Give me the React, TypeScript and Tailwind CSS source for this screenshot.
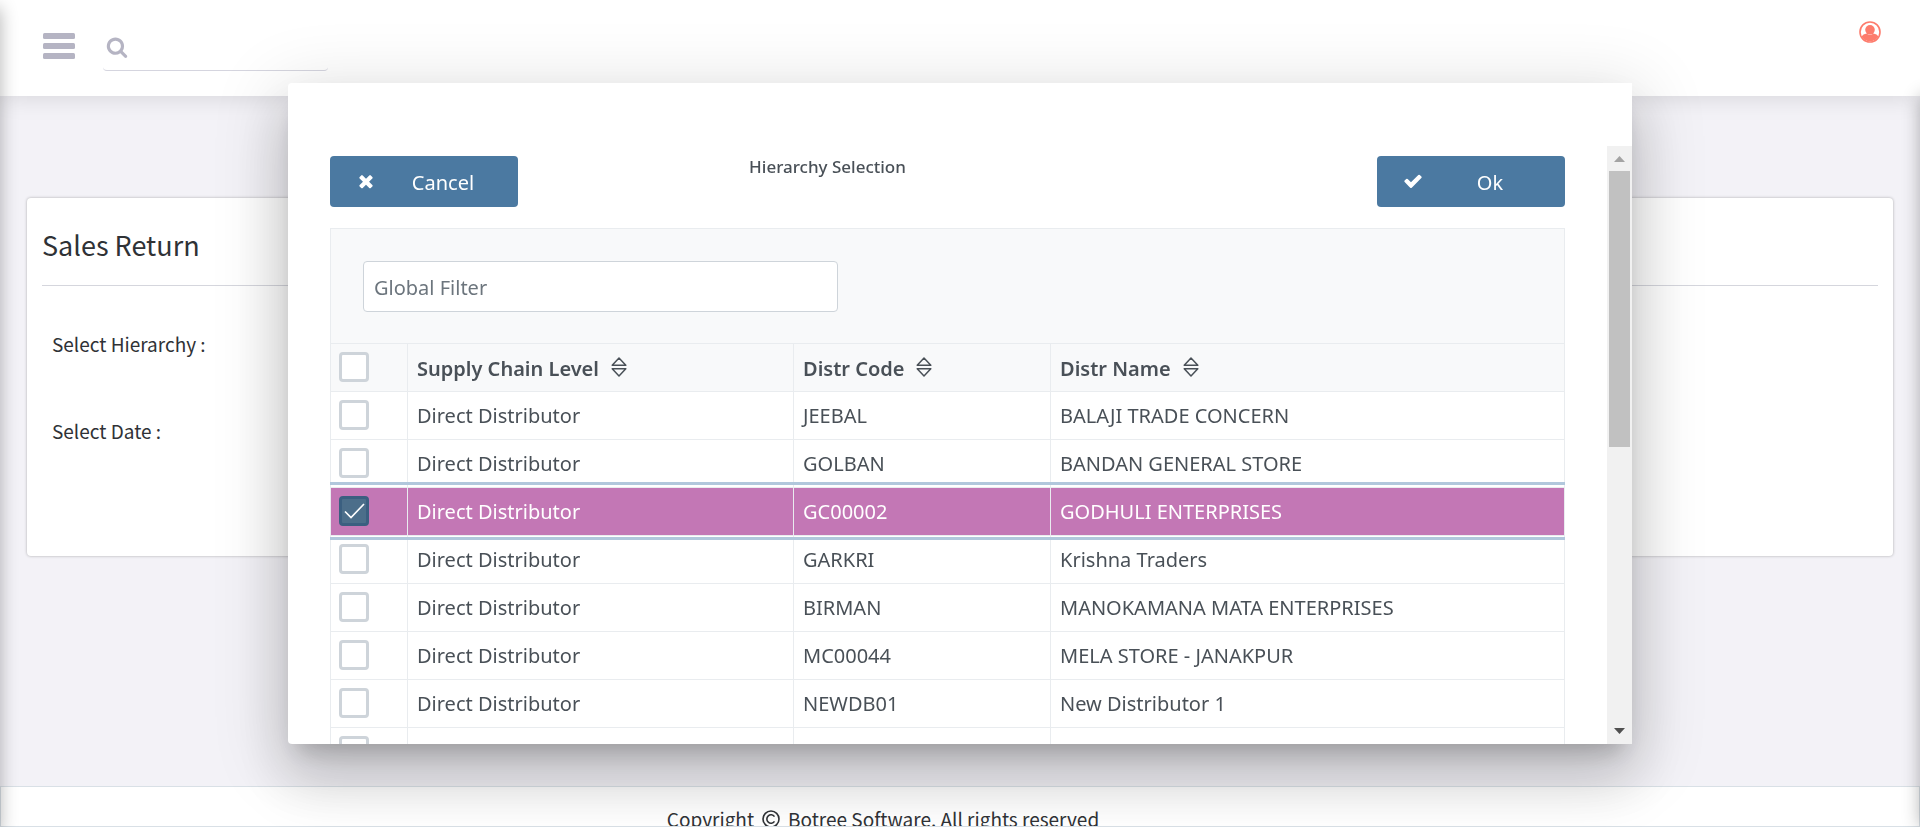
import React, { useState } from "react";

const rows = [
  ["JEEBAL", "BALAJI TRADE CONCERN"],
  ["GOLBAN", "BANDAN GENERAL STORE"],
  ["GC00002", "GODHULI ENTERPRISES"],
  ["GARKRI", "Krishna Traders"],
  ["BIRMAN", "MANOKAMANA MATA ENTERPRISES"],
  ["MC00044", "MELA STORE - JANAKPUR"],
  ["NEWDB01", "New Distributor 1"],
  ["NEWDB02", "Gunavi Sellers"],
];

function SortIcon() {
  return (
    <svg className="h-5 w-4" viewBox="0 0 16 20" fill="none" stroke="currentColor" strokeWidth="1.5" strokeLinejoin="round" aria-hidden="true">
      <path d="M8 1 L14.8 8.2 H1.2 Z" />
      <path d="M8 19 L14.8 11.8 H1.2 Z" />
    </svg>
  );
}

function Check({ checked, onChange, label }: { checked: boolean; onChange: () => void; label: string }) {
  return (
    <span className="grid h-[30px] w-[30px]">
      <input
        type="checkbox"
        aria-label={label}
        checked={checked}
        onChange={onChange}
        className="col-start-1 row-start-1 h-[30px] w-[30px] appearance-none rounded border-3 border-[#ced4da] bg-white checked:border-[#3b5f80] checked:bg-[#4c6e8a]"
      />
      {checked && (
        <svg className="pointer-events-none col-start-1 row-start-1 h-[30px] w-[30px]" viewBox="0 0 30 30" fill="none" stroke="#fff" strokeWidth="1.7" aria-hidden="true">
          <path d="M6 15.5 L12 21.5 L25 8" />
        </svg>
      )}
    </span>
  );
}

function HeadCell({ label, width }: { label: string; width: string }) {
  return (
    <th scope="col" className={`${width} border border-[#e9ecef] bg-[#f8f9fa] px-[9px] text-left font-semibold`}>
      <button type="button" className="flex items-center gap-3">
        <span className="pt-[3px]">{label}</span>
        <SortIcon />
      </button>
    </th>
  );
}

function HierarchyDialog() {
  const [selected, setSelected] = useState<string[]>(["GC00002"]);
  const toggle = (code: string) =>
    setSelected((s) => (s.includes(code) ? s.filter((c) => c !== code) : [...s, code]));

  return (
    <div
      role="dialog"
      aria-labelledby="dialog-title"
      className="fixed inset-x-[15vw] inset-y-[10vh] flex flex-col overflow-hidden rounded-l bg-white pt-[63px] font-['Noto_Sans',sans-serif] text-[#495057] shadow-[0_16px_22px_-10px_rgba(0,0,0,0.2),0_36px_57px_4px_rgba(0,0,0,0.14),0_14px_69px_12px_rgba(0,0,0,0.12)]"
    >
      <div className="flex min-h-0 flex-1">
        <div className="min-w-0 flex-1 overflow-hidden pr-[42px] pl-[42px] pt-[10px]">
          <div className="flex justify-between">
            <button type="button" className="flex h-[51px] w-[188px] items-center rounded bg-[#4b79a1] pl-[26px] text-xl text-white">
              <svg className="h-5 w-5" viewBox="0 0 1792 1792" fill="currentColor" aria-hidden="true">
                <path d="M1490 1322q0 40-28 68l-136 136q-28 28-68 28t-68-28l-294-294-294 294q-28 28-68 28t-68-28l-136-136q-28-28-28-68t28-68l294-294-294-294q-28-28-28-68t28-68l136-136q28-28 68-28t68 28l294 294 294-294q28-28 68-28t68 28l136 136q28 28 28 68t-28 68l-294 294 294 294q28 28 28 68z" />
              </svg>
              <span className="flex-1 pt-1 pr-2 text-center">Cancel</span>
            </button>
            <h2 id="dialog-title" className="pr-[240px] text-[17px]/[22px] font-medium">Hierarchy Selection</h2>
            <button type="button" className="flex h-[51px] w-[188px] items-center rounded bg-[#4b79a1] pl-[26px] text-xl text-white">
              <svg className="h-5 w-5" viewBox="0 0 1792 1792" fill="currentColor" aria-hidden="true">
                <path d="M1671 566q0 40-28 68l-724 724-136 136q-28 28-68 28t-68-28l-136-136-362-362q-28-28-28-68t28-68l136-136q28-28 68-28t68 28l294 295 656-657q28-28 68-28t68 28l136 136q28 28 28 68z" />
              </svg>
              <span className="flex-1 pt-1 pr-2 text-center">Ok</span>
            </button>
          </div>

          <div className="mt-[21px] overflow-hidden">
            <div className="border border-b-0 border-[#e9ecef] bg-[#f8f9fa] px-8 pt-8 pb-[31px]">
              <input
                type="text"
                aria-label="Global Filter"
                placeholder="Global Filter"
                className="h-[51px] w-[475px] rounded border border-[#ced4da] bg-white px-[10px] pt-0.5 text-xl placeholder:text-[#6c757d]"
              />
            </div>
            <table className="w-full table-fixed border-collapse text-xl leading-6">
              <thead>
                <tr className="h-12">
                  <th scope="col" className="w-[77px] border border-[#e9ecef] bg-[#f8f9fa] px-2">
                    <Check
                      label="Select all"
                      checked={selected.length === rows.length}
                      onChange={() => setSelected(selected.length === rows.length ? [] : rows.map((r) => r[0]))}
                    />
                  </th>
                  <HeadCell label="Supply Chain Level" width="w-[386px]" />
                  <HeadCell label="Distr Code" width="w-[257px]" />
                  <HeadCell label="Distr Name" width="w-auto" />
                </tr>
              </thead>
              <tbody>
                {rows.map(([code, name]) => {
                  const on = selected.includes(code);
                  return (
                    <tr
                      key={code}
                      className={on ? "h-12 bg-[#c377b5] text-white outline-3 outline-offset-2 outline-[#b1c7dc]" : "h-12"}
                    >
                      <td className="border border-[#e9ecef] px-2">
                        <Check label={`Select ${name}`} checked={on} onChange={() => toggle(code)} />
                      </td>
                      <td className="border border-[#e9ecef] px-[9px] pt-0.5">Direct Distributor</td>
                      <td className="border border-[#e9ecef] px-[9px] pt-0.5">{code}</td>
                      <td className="border border-[#e9ecef] px-[9px] pt-0.5">{name}</td>
                    </tr>
                  );
                })}
              </tbody>
            </table>
          </div>
        </div>

        <div className="flex w-[25px] flex-col items-center bg-[#f1f1f1]" aria-hidden="true">
          <svg className="h-[25px] w-[25px] shrink-0" viewBox="0 0 25 25" fill="#a3a3a3">
            <path d="M12.5 10 L18 16 H7 Z" />
          </svg>
          <div className="h-[46.2%] w-[21px] bg-[#c1c1c1]" />
          <svg className="mt-auto h-[25px] w-[25px] shrink-0" viewBox="0 0 25 25" fill="#505050">
            <path d="M7 9 H18 L12.5 15 Z" />
          </svg>
        </div>
      </div>
    </div>
  );
}

export default function App() {
  return (
    <div className="relative flex h-screen flex-col overflow-hidden bg-[#f3f2f7] font-['Noto_Sans_CJK_SC',sans-serif] text-[#2f3236]">
      <header className="flex h-24 shrink-0 items-start bg-white pl-[43px] shadow-[0_0_24px_rgba(0,0,0,0.13)]">
        <button type="button" aria-label="Menu" className="mt-[33px]">
          <svg className="h-[26px] w-8" viewBox="0 0 32 26" fill="#b5b4c3" aria-hidden="true">
            <rect width="32" height="6" rx="1.5" />
            <rect y="10" width="32" height="6" rx="1.5" />
            <rect y="20" width="32" height="6" rx="1.5" />
          </svg>
        </button>
        <label className="mt-[23px] ml-7 flex h-12 w-[225px] items-center rounded border-b border-[#d5d5df] pl-[3px]">
          <svg className="h-[22px] w-[22px] shrink-0" viewBox="0 0 1792 1792" fill="#b5b4c3" aria-hidden="true">
            <path d="M1216 832q0-185-131.5-316.5t-316.5-131.5-316.5 131.5-131.5 316.5 131.5 316.5 316.5 131.5 316.5-131.5 131.5-316.5zm512 832q0 52-38 90t-90 38q-54 0-90-38l-343-342q-179 124-399 124-143 0-273.5-55.5t-225-150-150-225-55.5-273.5 55.5-273.5 150-225 225-150 273.5-55.5 273.5 55.5 225 150 150 225 55.5 273.5q0 220-124 399l343 343q37 37 37 90z" />
          </svg>
          <input type="text" aria-label="Search" className="min-w-0 flex-1 bg-transparent px-2 outline-none" />
        </label>
        <button type="button" aria-label="Account" className="mt-[21px] mr-[39px] ml-auto">
          <svg className="h-[22px] w-[22px]" viewBox="0 0 22 22" aria-hidden="true">
            <circle cx="11" cy="11" r="10" fill="none" stroke="#fd7b6c" strokeWidth="1.6" />
            <path d="M2.5 15.5 Q4 13 7.5 12.6 Q11 15 14.5 12.6 Q18 13 19.5 15.5 A10 10 0 0 1 2.5 15.5 Z" fill="#fd7b6c" />
            <circle cx="11" cy="8.8" r="4.8" fill="#fd7b6c" />
          </svg>
        </button>
      </header>

      <main className="flex-1 px-[27px] pt-[102px]">
        <section className="h-[358px] rounded-sm bg-white px-[15px] shadow-[0_0_3px_rgba(0,0,0,0.3)]">
          <h1 className="flex h-[88px] items-center border-b border-[#d5d6dd] pt-2 text-[27px]">Sales Return</h1>
          <div className="flex flex-col gap-[63px] px-[10px] pt-[46px] text-[19px]/6">
            <p>Select Hierarchy :</p>
            <p>Select Date :</p>
          </div>
        </section>
      </main>

      <footer className="flex h-[41px] shrink-0 items-start justify-center overflow-hidden border border-[#d9e0e6] bg-white pt-5 pr-[154px] text-[19px]/6">
        <p className="flex items-center gap-2">
          Copyright
          <svg className="h-[18px] w-[18px]" viewBox="0 0 18 18" fill="none" stroke="currentColor" strokeWidth="1.6" aria-hidden="true">
            <circle cx="9" cy="9" r="8" />
            <path d="M12.5 6.6 A4.2 4.2 0 1 0 12.5 11.4" />
          </svg>
          Botree Software. All rights reserved
        </p>
      </footer>

      <div className="pointer-events-none absolute inset-y-0 right-full w-10 shadow-[0_8px_18px_rgba(0,0,0,0.3)]" />
      <div className="pointer-events-none absolute top-24 bottom-0 left-full w-10 shadow-[0_0_18px_rgba(0,0,0,0.3)]" />

      <HierarchyDialog />
    </div>
  );
}
